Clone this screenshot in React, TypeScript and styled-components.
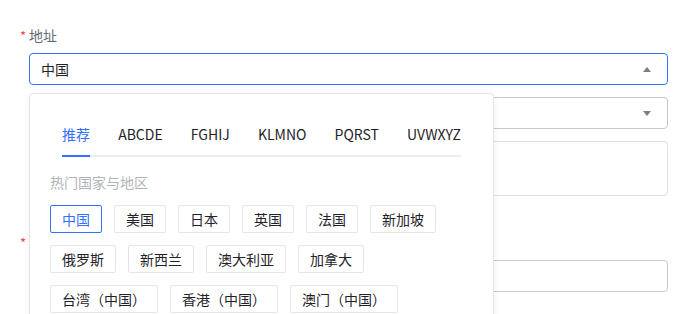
import React, { useState } from 'react';
import styled, { createGlobalStyle } from 'styled-components';

const GlobalStyle = createGlobalStyle`
  html {
    height: 100%;
    overflow: hidden;
  }
  body {
    margin: 0;
    padding: 0;
    min-height: 100%;
    background: #fff;
    font-family: "Noto Sans CJK SC", "Noto Sans", sans-serif;
    font-size: 14px;
    color: #1f2329;
  }
  #root {
    min-height: 100vh;
  }
`;

const tabs = ['推荐', 'ABCDE', 'FGHIJ', 'KLMNO', 'PQRST', 'UVWXYZ'];

const hotRegions = [
  '中国', '美国', '日本', '英国', '法国', '新加坡',
  '俄罗斯', '新西兰', '澳大利亚', '加拿大',
  '台湾（中国）', '香港（中国）', '澳门（中国）',
];

const App: React.FC = () => {
  const [activeTab, setActiveTab] = useState(0);
  const [region, setRegion] = useState('中国');

  return (
    <>
      <GlobalStyle />
      <Form>
        <Item>
          <Label>
            <Required>*</Required>地址
          </Label>
          <Control>
            <SelectWrap>
              <Select $focused>
                <Value>{region}</Value>
                <Arrow $up />
              </Select>
              <Panel>
                <TabList>
                  {tabs.map((t, i) => (
                    <Tab key={t} $active={i === activeTab} onClick={() => setActiveTab(i)}>
                      {t}
                    </Tab>
                  ))}
                </TabList>
                <SectionTitle>热门国家与地区</SectionTitle>
                <Chips>
                  {hotRegions.map((r) => (
                    <Chip key={r} $selected={r === region} onClick={() => setRegion(r)}>
                      {r}
                    </Chip>
                  ))}
                </Chips>
              </Panel>
            </SelectWrap>
            <Select>
              <Value />
              <Arrow />
            </Select>
            <TextArea />
          </Control>
        </Item>
        <Item>
          <Label>
            <Required>*</Required>邮编
          </Label>
          <Control>
            <Input />
          </Control>
        </Item>
      </Form>
    </>
  );
};

const Form = styled.div`
  display: flex;
  flex-direction: column;
  gap: 35px;
  box-sizing: border-box;
  min-height: 100vh;
  padding: 24px 27px 0 20px;
`;

const Item = styled.div`
  display: flex;
  flex-direction: column;
  gap: 7px;
`;

const Label = styled.div`
  display: flex;
  align-items: center;
  height: 22px;
  line-height: 22px;
  color: #646a73;
  font-size: 14px;
`;

const Required = styled.span`
  width: 9px;
  color: #f54a45;
  font-size: 13px;
  padding-top: 2px;
`;

const Control = styled.div`
  display: flex;
  flex-direction: column;
  gap: 12px;
  margin-left: 9px;
`;

const SelectWrap = styled.div`
  position: relative;
`;

const Select = styled.div<{ $focused?: boolean }>`
  display: flex;
  align-items: center;
  justify-content: space-between;
  box-sizing: border-box;
  height: 32px;
  padding: 0 16px 0 11px;
  border: 1px solid ${(p) => (p.$focused ? '#3370ff' : '#c4c7cc')};
  border-radius: 4px;
  background: #fff;
`;

const Value = styled.span`
  font-size: 14px;
  color: #1f2329;
`;

const Arrow = styled.span<{ $up?: boolean }>`
  width: 0;
  height: 0;
  border-left: 4px solid transparent;
  border-right: 4px solid transparent;
  ${(p) => (p.$up ? 'border-bottom: 5px solid #7a7d82;' : 'border-top: 5px solid #7a7d82;')}
`;

const TextArea = styled.div`
  box-sizing: border-box;
  height: 55px;
  border: 1px solid #dee0e3;
  border-radius: 4px;
`;

const Input = styled.div`
  box-sizing: border-box;
  height: 32px;
  border: 1px solid #c4c7cc;
  border-radius: 4px;
`;

const Panel = styled.div`
  position: absolute;
  left: 0;
  top: calc(100% + 8px);
  z-index: 10;
  box-sizing: border-box;
  width: 465px;
  padding: 24px 20px 6px;
  background: #fff;
  border: 1px solid #e3e4e6;
  border-radius: 4px;
  box-shadow: 0 2px 8px rgba(31, 35, 41, 0.06);
`;

const TabList = styled.div`
  display: flex;
  justify-content: space-between;
  margin: 0 12px;
  border-bottom: 2px solid #ebedf0;
`;

const Tab = styled.div<{ $active?: boolean }>`
  padding: 6px 0 11px;
  margin-bottom: -2px;
  line-height: 20px;
  font-size: 14px;
  color: ${(p) => (p.$active ? '#3370ff' : '#1f2329')};
  border-bottom: 2px solid ${(p) => (p.$active ? '#3370ff' : 'transparent')};
  cursor: pointer;
`;

const SectionTitle = styled.div`
  margin: 15px 0 13px;
  line-height: 20px;
  font-size: 14px;
  color: #b1b4b9;
`;

const Chips = styled.div`
  display: flex;
  flex-wrap: wrap;
  gap: 12px;
`;

const Chip = styled.div<{ $selected?: boolean }>`
  box-sizing: border-box;
  height: 28px;
  line-height: 26px;
  padding: 0 11px;
  font-size: 14px;
  white-space: nowrap;
  color: ${(p) => (p.$selected ? '#3370ff' : '#1f2329')};
  border: 1px solid ${(p) => (p.$selected ? '#3370ff' : '#e5e6eb')};
  border-radius: 2px;
  cursor: pointer;
`;

export default App;
